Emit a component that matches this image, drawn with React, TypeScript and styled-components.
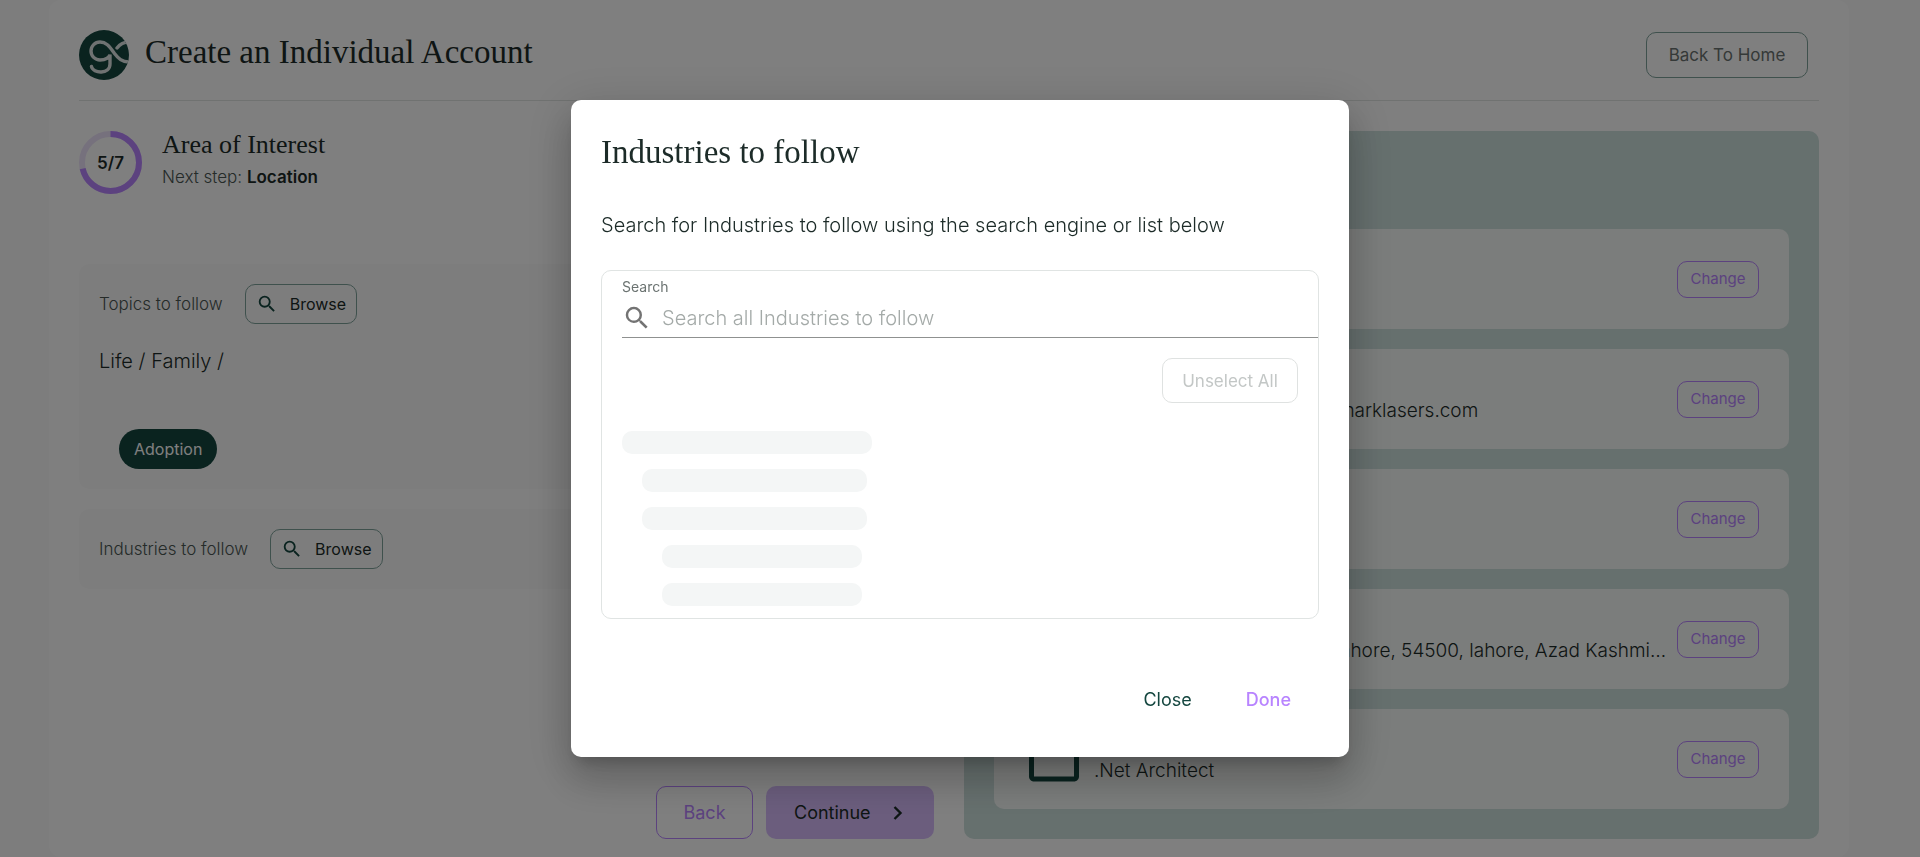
import React from 'react';
import styled, { createGlobalStyle } from 'styled-components';
import {
  MdHomeWork,
  MdMailOutline,
  MdPersonOutline,
  MdPlace,
  MdSearch,
  MdWorkOutline,
} from 'react-icons/md';

const color = {
  ink: '#1c2b28',
  green: '#14463f',
  muted: '#6b7371',
  purple: '#b884ff',
  lilac: '#d6bbfb',
  mint: '#cde0dd',
  mist: '#f7faf8',
  page: '#fbfbfb',
};

const GlobalStyle = createGlobalStyle`
  * { box-sizing: border-box; }
  body {
    margin: 0;
    overflow: hidden;
    background: ${color.page};
    color: ${color.ink};
    font-family: Inter, 'Liberation Sans', sans-serif;
    font-size: 19px;
    font-weight: 300;
    line-height: 24px;
  }
  button, input { font: inherit; color: inherit; }
  h1, h2, h3, p, ul { margin: 0; padding: 0; }
`;

const Page = styled.div`
  min-height: 100vh;
  padding: 0 71px 0 49px;
`;

const Sheet = styled.main`
  min-height: 100vh;
  padding: 30px 30px 18px;
  border-radius: 12px;
  background: #fff;
`;

const Header = styled.header`
  display: flex;
  align-items: center;
  padding-bottom: 20px;
  border-bottom: 1px solid #e0e4e3;
`;

const Serif = styled.h1<{ $size: number; $line: number }>`
  font-family: 'Liberation Serif', serif;
  font-weight: 400;
  font-size: ${(p) => p.$size}px;
  line-height: ${(p) => p.$line}px;
`;

const PageTitle = styled(Serif)`
  flex: 1;
  padding: 0 16px 6px;
`;

const OutlineButton = styled.button<{
  $tone: string;
  $edge: string;
  $height: number;
  $size: number;
}>`
  display: inline-flex;
  align-items: center;
  justify-content: center;
  gap: 12px;
  flex: none;
  height: ${(p) => p.$height}px;
  padding: 0 10px;
  border: 1px solid ${(p) => p.$edge};
  border-radius: 10px;
  background: transparent;
  color: ${(p) => p.$tone};
  font-size: ${(p) => p.$size}px;
  font-weight: 400;
  white-space: nowrap;
`;

const HomeButton = styled(OutlineButton)`
  width: 162px;
  margin-right: 11px;
`;

const Columns = styled.div`
  display: grid;
  grid-template-columns: minmax(0, 1fr) minmax(0, 1fr);
  gap: 30px;
  padding-top: 30px;
`;

const Form = styled.section`
  display: flex;
  flex-direction: column;
  gap: 20px;
`;

const Step = styled.div`
  display: flex;
  gap: 20px;
  height: 63px;
  margin-bottom: 50px;
`;

const StepText = styled.div`
  display: flex;
  flex-direction: column;
  gap: 6px;
`;

const Small = styled.p`
  font-size: 17px;
  color: #4a5653;
  strong {
    font-weight: 600;
    color: ${color.ink};
  }
`;

const Ring = styled.div`
  display: grid;
  place-items: center;
  > * { grid-area: 1 / 1; }
  span { font-size: 17px; font-weight: 600; }
`;

const Topic = styled.section`
  padding: 20px;
  border-radius: 10px;
  background: ${color.page};
`;

const TopicHead = styled.div`
  display: flex;
  align-items: center;
  gap: 22px;
`;

const Path = styled.p`
  margin: 25px 0 56px;
  font-size: 20px;
`;

const Chip = styled.span`
  display: inline-flex;
  align-items: center;
  height: 40px;
  margin-left: 20px;
  padding: 0 15px;
  border-radius: 20px;
  background: ${color.green};
  color: #fff;
  font-size: 16px;
  font-weight: 400;
  vertical-align: top;
`;

const FormActions = styled.div`
  display: flex;
  justify-content: flex-end;
  gap: 13px;
  margin-top: auto;
`;

const BackButton = styled(OutlineButton)`
  width: 97px;
`;

const ContinueButton = styled.button`
  display: flex;
  align-items: center;
  justify-content: space-between;
  width: 168px;
  height: 53px;
  padding: 0 31px 0 28px;
  border: 0;
  border-radius: 10px;
  background: ${color.lilac};
  font-size: 18px;
  font-weight: 400;
`;

const Summary = styled.aside`
  padding: 30px;
  border-radius: 10px;
  background: ${color.mint};
`;

const SummaryTitle = styled(Serif)`
  padding-bottom: 38px;
`;

const SummaryList = styled.ul`
  display: flex;
  flex-direction: column;
  gap: 20px;
  list-style: none;
`;

const SummaryCard = styled.li`
  display: flex;
  align-items: center;
  gap: 10px;
  height: 100px;
  padding: 0 30px;
  border-radius: 10px;
  background: ${color.mist};
  > svg { flex: none; color: ${color.green}; }
`;

const SummaryText = styled.div`
  flex: 1;
  min-width: 0;
`;

const Value = styled.p`
  overflow: hidden;
  text-overflow: ellipsis;
  white-space: nowrap;
`;

const ChangeButton = styled(OutlineButton)`
  width: 82px;
`;

const Backdrop = styled.div`
  position: fixed;
  inset: 0;
  display: flex;
  align-items: center;
  justify-content: center;
  background: rgba(0, 0, 0, 0.5);
`;

const Dialog = styled.section`
  width: 778px;
  max-width: calc(100% - 64px);
  padding: 30px;
  border-radius: 10px;
  background: #fff;
  box-shadow:
    0 11px 15px -7px rgba(0, 0, 0, 0.2),
    0 24px 38px 3px rgba(0, 0, 0, 0.14),
    0 9px 46px 8px rgba(0, 0, 0, 0.12);
`;

const Intro = styled.p`
  padding: 39px 0 33px;
  font-size: 20px;
`;

const Picker = styled.div`
  display: flex;
  flex-direction: column;
  height: 349px;
  padding: 4px 0 0 20px;
  border: 1px solid #e0e4e3;
  border-radius: 10px;
`;

const SearchLabel = styled.label`
  color: ${color.muted};
  font-size: 14px;
  font-weight: 400;
`;

const SearchField = styled.div`
  display: flex;
  align-items: center;
  gap: 10px;
  height: 39px;
  border-bottom: 1px solid #8f9190;
  color: #737373;
`;

const SearchInput = styled.input`
  flex: 1;
  min-width: 0;
  padding: 0;
  border: 0;
  outline: 0;
  background: transparent;
  color: ${color.ink};
  font-size: 20px;
  &::placeholder { color: #a4aaa8; opacity: 1; }
`;

const UnselectButton = styled(OutlineButton)`
  align-self: flex-end;
  width: 136px;
  margin: 20px 20px 28px 0;
`;

const Skeletons = styled.div`
  display: flex;
  flex-direction: column;
  gap: 15px;
`;

const Bone = styled.div<{ $level: number }>`
  width: ${(p) => 250 - p.$level * 25}px;
  height: 23px;
  margin-left: ${(p) => p.$level * 20}px;
  border-radius: 10px;
  background: #f4f6f6;
`;

const DialogActions = styled.div`
  display: flex;
  justify-content: flex-end;
  gap: 10px;
  padding: 57px 6px 4px 0;
`;

const TextButton = styled.button<{ $tone: string; $weight: number }>`
  height: 47px;
  padding: 0 22px;
  border: 0;
  border-radius: 10px;
  background: transparent;
  color: ${(p) => p.$tone};
  font-size: 18px;
  font-weight: ${(p) => p.$weight};
`;

const Logo = () => (
  <svg width="50" height="50" viewBox="0 0 50 50" fill="none" aria-hidden="true">
    <clipPath id="disc"><circle cx="25" cy="25" r="25" /></clipPath>
    <circle cx="25" cy="25" r="25" fill={color.green} />
    <g clipPath="url(#disc)" stroke="#dfe5e4" strokeWidth="3.4" strokeLinecap="round">
      <path d="M51 32C43 32.5 39 28 35.5 23.5C31 17.5 28 12 21 12A9 9 0 1 0 21 30C27 30 30.5 27 31 24.5V34C31 44.5 14 44 12.5 36.5" />
      <path d="M38 18C41 14 44 12 50 12" />
    </g>
  </svg>
);

const Progress = ({ step, total }: { step: number; total: number }) => {
  const length = 2 * Math.PI * 28.5;
  return (
    <Ring>
      <svg width="63" height="63" viewBox="0 0 63 63" fill="none" strokeWidth="6" aria-hidden="true">
        <circle cx="31.5" cy="31.5" r="28.5" stroke="#ede3fa" />
        <circle
          cx="31.5"
          cy="31.5"
          r="28.5"
          stroke={color.purple}
          strokeDasharray={`${(length * step) / total} ${length}`}
          transform="rotate(-90 31.5 31.5)"
        />
      </svg>
      <span>{step}/{total}</span>
    </Ring>
  );
};

const BrowseButton = () => (
  <OutlineButton $tone={color.ink} $edge="#7fa29b" $height={40} $size={16}>
    <MdSearch size={22} color={color.green} />
    Browse
  </OutlineButton>
);

const summary = [
  { icon: MdPersonOutline, label: 'Name', value: 'Individual' },
  { icon: MdMailOutline, label: 'Email', value: 'individual.account.owner@sharklasers.com' },
  { icon: MdPlace, label: 'Country', value: 'Pakistan' },
  { icon: MdHomeWork, label: 'Address', value: 'Main Boulevard, Gulberg 1, lahore, 54500, lahore, Azad Kashmir, Pakistan' },
  { icon: MdWorkOutline, label: 'Profession', value: '.Net Architect' },
];

export default function App() {
  return (
    <>
      <GlobalStyle />
      <Page>
        <Sheet>
          <Header>
            <Logo />
            <PageTitle $size={33} $line={42}>Create an Individual Account</PageTitle>
            <HomeButton $tone={color.muted} $edge="#7fa29b" $height={46} $size={17}>
              Back To Home
            </HomeButton>
          </Header>
          <Columns>
            <Form>
              <Step>
                <Progress step={5} total={7} />
                <StepText>
                  <Serif as="h2" $size={26} $line={28}>Area of Interest</Serif>
                  <Small>Next step: <strong>Location</strong></Small>
                </StepText>
              </Step>
              <Topic>
                <TopicHead>
                  <Small>Topics to follow</Small>
                  <BrowseButton />
                </TopicHead>
                <Path>Life / Family /</Path>
                <Chip>Adoption</Chip>
              </Topic>
              <Topic>
                <TopicHead>
                  <Small>Industries to follow</Small>
                  <BrowseButton />
                </TopicHead>
              </Topic>
              <FormActions>
                <BackButton $tone={color.purple} $edge={color.purple} $height={53} $size={18}>
                  Back
                </BackButton>
                <ContinueButton>
                  Continue
                  <svg width="10" height="14" viewBox="0 0 10 14" fill="none" stroke="currentColor" strokeWidth="2.4" aria-hidden="true">
                    <path d="M1.5 1L7.5 7L1.5 13" />
                  </svg>
                </ContinueButton>
              </FormActions>
            </Form>
            <Summary>
              <SummaryTitle as="h2" $size={26} $line={30}>Summary</SummaryTitle>
              <SummaryList>
                {summary.map(({ icon: Icon, label, value }) => (
                  <SummaryCard key={label}>
                    <Icon size={60} />
                    <SummaryText>
                      <Small>{label}</Small>
                      <Value>{value}</Value>
                    </SummaryText>
                    <ChangeButton $tone={color.purple} $edge={color.purple} $height={37} $size={15}>
                      Change
                    </ChangeButton>
                  </SummaryCard>
                ))}
              </SummaryList>
            </Summary>
          </Columns>
        </Sheet>
      </Page>
      <Backdrop>
        <Dialog role="dialog" aria-modal="true" aria-labelledby="dialog-title">
          <Serif as="h2" id="dialog-title" $size={33} $line={44}>Industries to follow</Serif>
          <Intro>Search for Industries to follow using the search engine or list below</Intro>
          <Picker>
            <SearchLabel htmlFor="industry-search">Search</SearchLabel>
            <SearchField>
              <MdSearch size={30} />
              <SearchInput id="industry-search" type="text" placeholder="Search all Industries to follow" />
            </SearchField>
            <UnselectButton disabled $tone="#c3c7c6" $edge="#dfe2e1" $height={45} $size={17}>
              Unselect All
            </UnselectButton>
            <Skeletons>
              {[0, 1, 1, 2, 2].map((level, i) => <Bone key={i} $level={level} />)}
            </Skeletons>
          </Picker>
          <DialogActions>
            <TextButton $tone={color.green} $weight={400}>Close</TextButton>
            <TextButton $tone={color.purple} $weight={500}>Done</TextButton>
          </DialogActions>
        </Dialog>
      </Backdrop>
    </>
  );
}
